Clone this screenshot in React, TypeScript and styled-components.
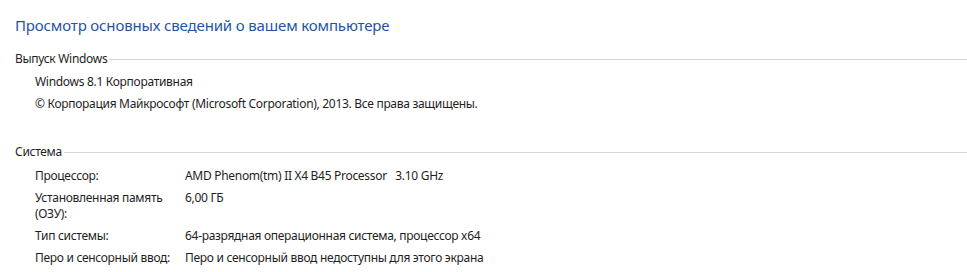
import styled, { createGlobalStyle } from 'styled-components'

const Global = createGlobalStyle`
  html, body {
    margin: 0;
    padding: 0;
    background: #ffffff;
  }
  body {
    font-family: "Noto Sans", "Open Sans", sans-serif;
    font-size: 12px;
    letter-spacing: -0.3px;
    color: #1e1e1e;
  }
`

const Page = styled.div`
  padding: 15px 0 0 15px;
  display: flex;
  flex-direction: column;
`

const Title = styled.h1`
  margin: 0;
  font-size: 15px;
  font-weight: 400;
  line-height: 20px;
  letter-spacing: -0.15px;
  color: #1f54a5;
`

const Section = styled.section<{ $top: number }>`
  margin-top: ${p => p.$top}px;
  display: flex;
  flex-direction: column;
`

const SectionHeader = styled.div`
  display: flex;
  align-items: center;
  line-height: 16px;
  gap: 2px;

  &::after {
    content: '';
    flex: 1;
    border-top: 1px solid #d4d4d4;
  }
`

const Items = styled.div<{ $top: number }>`
  margin-top: ${p => p.$top}px;
  padding-left: 20px;
  display: flex;
  flex-direction: column;
  gap: 6px;
  line-height: 16px;
`

const Row = styled.div`
  display: grid;
  grid-template-columns: 150px 1fr;
`

const Label = styled.div`
  width: 145px;
`

const Value = styled.div`
  white-space: pre;
`

const rows: [string, string][] = [
  ['Процессор:', 'AMD Phenom(tm) II X4 B45 Processor   3.10 GHz'],
  ['Установленная память (ОЗУ):', '6,00 ГБ'],
  ['Тип системы:', '64-разрядная операционная система, процессор x64'],
  ['Перо и сенсорный ввод:', 'Перо и сенсорный ввод недоступны для этого экрана'],
]

export default function App() {
  return (
    <>
      <Global />
      <Page>
        <Title>Просмотр основных сведений о вашем компьютере</Title>
        <Section $top={16}>
          <SectionHeader>Выпуск Windows</SectionHeader>
          <Items $top={7}>
            <div>Windows 8.1 Корпоративная</div>
            <div>© Корпорация Майкрософт (Microsoft Corporation), 2013. Все права защищены.</div>
          </Items>
        </Section>
        <Section $top={32}>
          <SectionHeader>Система</SectionHeader>
          <Items $top={8}>
            {rows.map(([label, value]) => (
              <Row key={label}>
                <Label>{label}</Label>
                <Value>{value}</Value>
              </Row>
            ))}
          </Items>
        </Section>
      </Page>
    </>
  )
}
